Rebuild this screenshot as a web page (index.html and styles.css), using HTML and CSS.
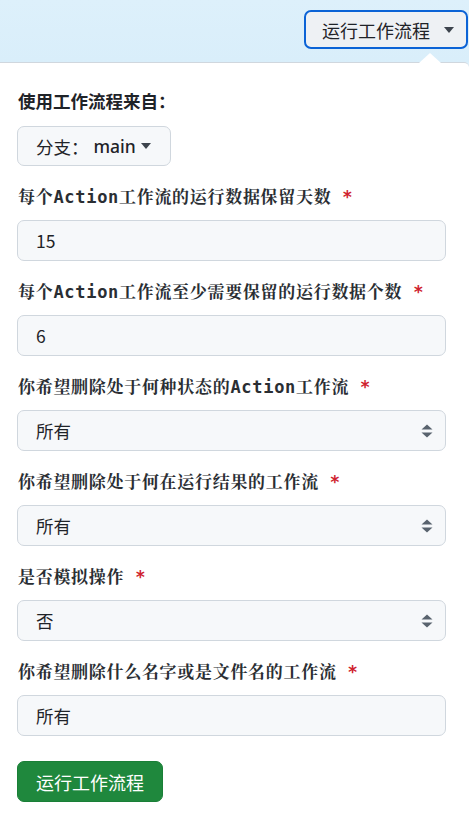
FILE: index.html
```html
<!DOCTYPE html>
<html lang="zh">
<head>
<meta charset="utf-8">
<link rel="stylesheet" href="styles.css">
</head>
<body>
<div class="topbar">
  <button class="run-toggle">运行工作流程 <span class="caret"></span></button>
</div>
<div class="panel">
  <span class="panel-arrow"></span>
  <div class="heading">使用工作流程来自：</div>
  <button class="branch">分支： <b>main</b> <span class="caret"></span></button>

  <div class="field">
    <label class="label">每个Action工作流的运行数据保留天数 <span class="req">*</span></label>
    <div class="input">15</div>
  </div>
  <div class="field">
    <label class="label">每个Action工作流至少需要保留的运行数据个数 <span class="req">*</span></label>
    <div class="input">6</div>
  </div>
  <div class="field">
    <label class="label">你希望删除处于何种状态的Action工作流 <span class="req">*</span></label>
    <div class="input select">所有
      <svg class="updown" width="12" height="16" viewBox="0 0 12 16"><path d="M6 1.5 11.5 6.5H0.5Z M6 14.5 0.5 9.5H11.5Z" fill="#59636e"/></svg>
    </div>
  </div>
  <div class="field">
    <label class="label">你希望删除处于何在运行结果的工作流 <span class="req">*</span></label>
    <div class="input select">所有
      <svg class="updown" width="12" height="16" viewBox="0 0 12 16"><path d="M6 1.5 11.5 6.5H0.5Z M6 14.5 0.5 9.5H11.5Z" fill="#59636e"/></svg>
    </div>
  </div>
  <div class="field">
    <label class="label">是否模拟操作 <span class="req">*</span></label>
    <div class="input select">否
      <svg class="updown" width="12" height="16" viewBox="0 0 12 16"><path d="M6 1.5 11.5 6.5H0.5Z M6 14.5 0.5 9.5H11.5Z" fill="#59636e"/></svg>
    </div>
  </div>
  <div class="field">
    <label class="label">你希望删除什么名字或是文件名的工作流 <span class="req">*</span></label>
    <div class="input">所有</div>
  </div>

  <button class="run">运行工作流程</button>
</div>
</body>
</html>
```

FILE: styles.css
```css
html, body {
  margin: 0;
  padding: 0;
}
body {
  background: #dcf0fb;
  font-family: "Noto Sans CJK SC", "Noto Sans", sans-serif;
  color: #1f2328;
  font-size: 17.5px;
  width: 469px;
  height: 825px;
  overflow: hidden;
  display: flex;
  flex-direction: column;
}
.topbar {
  height: 62px;
  flex: none;
  display: flex;
  justify-content: flex-end;
  align-items: flex-start;
  background: linear-gradient(180deg, #ddf0fb 0%, #d9eefa 100%);
}
button {
  font-family: inherit;
  cursor: pointer;
}
.run-toggle {
  margin-top: 10px;
  margin-right: 1px;
  width: 164px;
  height: 39px;
  border: 2.5px solid #0b63d6;
  border-radius: 7px;
  background: #eef1f4;
  color: #1f2328;
  font-size: 18px;
  display: flex;
  align-items: center;
  justify-content: flex-start;
  padding: 0 0 0 16px;
  gap: 14px;
}
.caret {
  display: inline-block;
  width: 0;
  height: 0;
  border-left: 5.5px solid transparent;
  border-right: 5.5px solid transparent;
  border-top: 6px solid #3d444d;
}
.panel {
  position: relative;
  flex: 1;
  display: flex;
  flex-direction: column;
  align-items: stretch;
  background: #ffffff;
  border-top: 1px solid #d0d7de;
  border-top-right-radius: 5px;
  padding: 26px 23px 0 17px;
  box-sizing: border-box;
}
.panel-arrow {
  position: absolute;
  top: -10px;
  left: 419px;
  width: 0;
  height: 0;
  border-left: 11px solid transparent;
  border-right: 11px solid transparent;
  border-bottom: 10px solid #ffffff;
}
.heading {
  font-weight: 700;
  font-size: 17.5px;
  line-height: 24px;
  margin: 0 0 13px 1px;
}
.branch {
  align-self: flex-start;
  height: 40px;
  width: 154px;
  border: 1px solid #d0d7de;
  border-radius: 7px;
  background: #f6f8fa;
  color: #1f2328;
  font-size: 17.5px;
  display: flex;
  align-items: center;
  padding: 0 0 0 18px;
  gap: 5px;
  margin-bottom: 19px;
}
.branch b {
  font-family: "Noto Sans", sans-serif;
  font-weight: 500;
}
.field {
  display: flex;
  flex-direction: column;
  gap: 11px;
  margin-bottom: 19px;
}
.label {
  font-family: "DejaVu Sans Mono", "Noto Serif CJK SC", "Noto Sans CJK SC", monospace;
  font-weight: 700;
  font-size: 17px;
  letter-spacing: 0.7px;
  line-height: 24px;
  padding-left: 1px;
  color: #2a2e33;
}
.req {
  color: #cf222e;
}
.input {
  position: relative;
  height: 41px;
  box-sizing: border-box;
  border: 1px solid #d0d7de;
  border-radius: 7px;
  background: #f6f8fa;
  padding: 0 0 0 18px;
  display: flex;
  align-items: center;
  font-size: 17.5px;
  color: #1f2328;
}
.select {
  justify-content: space-between;
  padding-right: 12px;
}
.updown {
  display: block;
}
.run {
  align-self: flex-start;
  margin-top: 6px;
  height: 41px;
  width: 146px;
  background: #1f883d;
  border: 1px solid #1a7f37;
  border-radius: 7px;
  color: #ffffff;
  font-size: 18px;
  padding: 0;
  display: flex;
  align-items: center;
  justify-content: center;
}
```
